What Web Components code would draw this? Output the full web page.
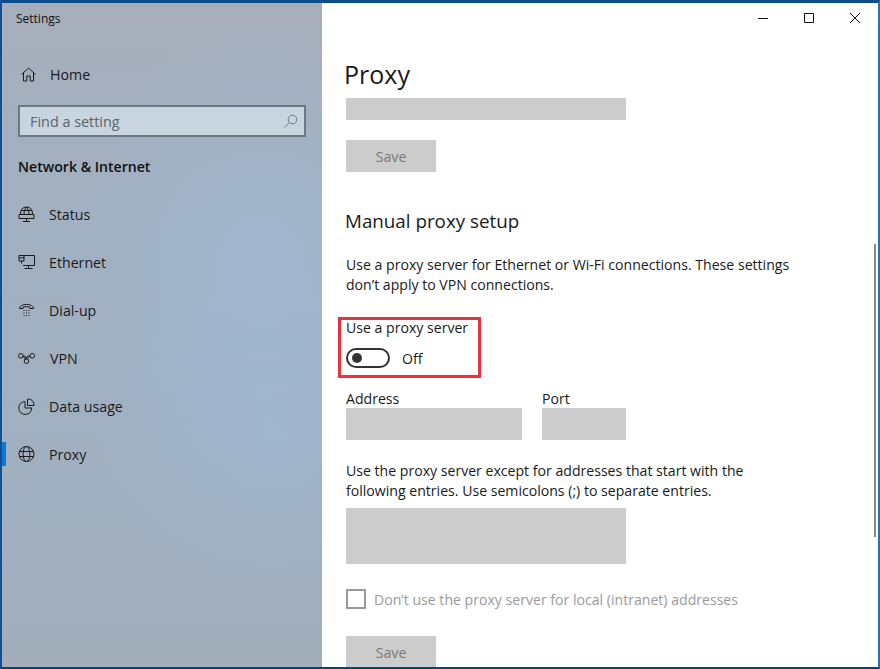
<!DOCTYPE html>
<html lang="en"><head><meta charset="utf-8"><title>Settings</title>
<style>
html,body{margin:0;padding:0;width:880px;height:669px;overflow:hidden;background:#fff}
body{font-family:"Open Sans","Noto Sans",sans-serif;color:#1a1a1a}
</style></head>
<body>
<settings-window>
  <settings-sidebar slot="side">
    <nav-item icon="home" style="--gap:13px;--ix:18px">Home</nav-item>
    <search-box placeholder="Find a setting"></search-box>
    <section-title>Network &amp; Internet</section-title>
    <nav-item icon="status">Status</nav-item>
    <nav-item icon="ethernet">Ethernet</nav-item>
    <nav-item icon="dialup">Dial-up</nav-item>
    <nav-item icon="vpn" style="--gap:15px">VPN</nav-item>
    <nav-item icon="data">Data usage</nav-item>
    <nav-item icon="globe" active>Proxy</nav-item>
  </settings-sidebar>
  <proxy-page slot="main"></proxy-page>
</settings-window>

<script>
const ICONS={
home:'<path d="M1.5 8.500 8.500 2 15.500 8.500M3.500 7V15H6.800V10H10.200V15H13.500V7"/>',
status:'<path d="M2.700 8.500A6 6 0 1 1 14.300 8.500M8.500 1C6.800 3 6 5.500 6 8.500M8.500 1C10.200 3 11 5.500 11 8.500M3 4.500H14M1 8.500H16V12.500H1ZM8.500 12.500V15.500M5 15.500H12"/>',
ethernet:'<path d="M6 1.500H16.500V11.500H5M1 1.500H6V7H1ZM1 3.800H6M3.500 7V9.500M10.500 11.500V14.500M6.500 14.500H14.500"/>',
dialup:'<path d="M1.500 6.500C1.500 4 4.500 2.500 8.500 2.500S15.500 4 15.500 6.500H12V5.200C10.500 4.500 6.500 4.500 5 5.200V6.500Z"/><path d="M5.500 8.500h1M8 8.500h1M10.500 8.500h1M5.500 11h1M8 11h1M10.500 11h1M5.500 13.500h1M8 13.500h1M10.500 13.500h1"/>',
vpn:'<circle cx="2.800" cy="5.800" r="2.300"/><circle cx="14.200" cy="5.800" r="2.300"/><circle cx="8.500" cy="11.200" r="2.300"/><path d="M5.100 5.800C7.500 5.800 8.500 7.500 8.500 8.900M11.900 5.800C9.500 5.800 8 7 6.500 10M5 6.500C7.500 9 9.500 9 12 6.500"/>',
data:'<path d="M7 3.500A6.500 6.500 0 1 0 13.800 10H7Z"/><path d="M9.500 1H10.500A5.800 5.800 0 0 1 16 7.500H9.500Z"/>',
globe:'<circle cx="8.500" cy="8" r="7.500"/><ellipse cx="8.500" cy="8" rx="3.400" ry="7.500"/><path d="M1.500 5.500H15.500M1.500 10.500H15.500"/>'
};
const def=(n,html)=>customElements.define(n,class extends HTMLElement{
  connectedCallback(){ if(this.shadowRoot)return; const r=this.attachShadow({mode:'open'}); r.innerHTML=typeof html==='function'?html(this):html; }
});
def('settings-window',`<style>
:host{display:flex;box-sizing:border-box;width:880px;height:669px;border-style:solid;border-color:#0c4d8c #1679c0 #0b4470 #114f94;border-width:3px 2px 2px 2px;background:#fff;overflow:hidden;position:relative}
.side{flex:0 0 320px;display:flex}
.main{flex:1;display:flex;flex-direction:column;min-width:0}
.bar{flex:0 0 34px;display:flex;justify-content:flex-end}
.btn{width:46px;height:30px;display:flex;align-items:center;justify-content:center}
.btn svg{width:12px;height:12px;fill:none;stroke:#111;stroke-width:1}
.body{flex:1;display:flex;min-height:0}
.sb{position:absolute;left:872px;top:241px;width:2px;height:293px;background:#8a8a8a}
</style>
<div class="side"><slot name="side"></slot></div>
<div class="main">
 <div class="bar">
  <div class="btn"><svg viewBox="0 0 12 12"><path d="M1 6.500H11"/></svg></div>
  <div class="btn"><svg viewBox="0 0 12 12"><path d="M1.500 1.500H10.500V10.500H1.500Z"/></svg></div>
  <div class="btn"><svg viewBox="0 0 12 12"><path d="M1 1 11 11M11 1 1 11"/></svg></div>
 </div>
 <div class="body"><slot name="main"></slot></div>
</div>
<div class="sb"></div>`);
def('settings-sidebar',`<style>
:host{display:flex;flex-direction:column;width:320px;height:100%;box-sizing:border-box;padding-top:8px;
background:
 radial-gradient(ellipse 190px 240px at 260px 260px,rgba(160,186,214,.6),rgba(160,186,214,0) 100%),
 radial-gradient(ellipse 180px 170px at 270px 430px,rgba(158,184,210,.6),rgba(158,184,210,0) 100%),
 linear-gradient(180deg,#a6aeba 0,#a2b0c0 30%,#a0b0c2 60%,#a2aeba 100%);}
.t{height:16px;padding-left:14px;font-size:12px;line-height:16px;color:#111}
.s{height:23px}
.items{display:flex;flex-direction:column}
</style><div class="t">Settings</div><div class="s"></div><div class="items"><slot></slot></div>`);
def('nav-item',el=>`<style>
:host{display:flex;position:relative;align-items:center;height:48px;box-sizing:border-box;padding-left:var(--ix,16px);font-size:14.200px;color:#1a1a1a}
svg{width:17px;height:17px;flex:none;fill:none;stroke:#1a1a1a;stroke-width:1}
span{margin-left:var(--gap,14px)}
.a{position:absolute;left:0;top:12px;width:4px;height:24px;background:#0a78d7}
</style>${el.hasAttribute('active')?'<div class="a"></div>':''}<svg viewBox="0 0 17 17">${ICONS[el.getAttribute('icon')]}</svg><span><slot></slot></span>`);
def('search-box',el=>`<style>
:host{display:flex;align-items:center;justify-content:space-between;box-sizing:border-box;width:288px;height:32px;margin:7px 0 0 16px;border:2px solid #6b7986;background:#c8d4de;padding:0 6px 0 10px;font-size:14.400px;color:#5b6570}
svg{width:15px;height:15px;fill:none;stroke:#6a7682;stroke-width:1}
</style><span>${el.getAttribute('placeholder')}</span><svg viewBox="0 0 15 15"><circle cx="9.500" cy="5.500" r="4.300"/><path d="M6.300 8.700 1.500 13.500"/></svg>`);
def('section-title',`<style>
:host{display:flex;align-items:center;height:36px;margin:11px 0 6px 16px;font-size:14.100px;font-weight:600;color:#111}
</style><slot></slot>`);
def('gray-field',`<style>:host{display:block;background:#cccccc;width:var(--w);height:var(--h)}</style>`);
def('save-button',`<style>:host{display:flex;align-items:center;justify-content:center;width:90px;height:32px;background:#cccccc;color:#7a7a7a;font-size:14.200px}</style><slot></slot>`);
def('toggle-switch',`<style>
:host{display:flex;align-items:center;gap:12px;font-size:14.100px;color:#1a1a1a}
.t{box-sizing:border-box;width:44px;height:20px;border:2px solid #333;border-radius:10px;display:flex;align-items:center;padding-left:4px}
.k{width:10px;height:10px;border-radius:50%;background:#333}
</style><div class="t"><div class="k"></div></div><slot></slot>`);
def('check-box',`<style>
:host{display:flex;align-items:center;gap:8px;font-size:14.100px;color:#9a9a9a}
.b{box-sizing:border-box;width:20px;height:20px;border:2px solid #9a9a9a}
</style><div class="b"></div><slot></slot>`);
def('proxy-page',`<style>
:host{display:flex;flex-direction:column;flex:1;padding-left:24px;font-size:14.100px;color:#1a1a1a;overflow:hidden;min-width:0}
h1{margin:14px 0 0 -2px;height:46px;line-height:46px;font-size:25px;font-weight:400;color:#1a1a1a}
h2{margin:0 0 0 -1px;font-weight:400;font-size:18.800px;line-height:28px;height:28px}
p{margin:0;line-height:20px;white-space:nowrap}
.hl{box-sizing:border-box;width:143px;height:61px;margin-left:-8px;border:3px solid #e8333f;padding:0 0 0 5px;display:flex;flex-direction:column;flex:none}
.hl .l{height:20px;line-height:20px;margin-top:-2px}
.fields{display:grid;grid-template-columns:176px 84px;grid-template-rows:19px 32px;column-gap:20px}
.fields div{height:19px;line-height:20px}
</style>
<h1>Proxy</h1>
<gray-field style="--w:280px;--h:22px;margin-top:1px;flex:none"></gray-field>
<save-button style="margin-top:20px;flex:none">Save</save-button>
<h2 style="margin-top:35px;flex:none">Manual proxy setup</h2>
<p style="margin-top:20px">Use a proxy server for Ethernet or Wi-Fi connections. These settings<br>don’t apply to VPN connections.</p>
<div class="hl" style="margin-top:22px"><div class="l">Use a proxy server</div><toggle-switch style="margin-top:10px">Off</toggle-switch></div>
<div class="fields" style="margin-top:11px"><div>Address</div><div>Port</div>
<gray-field style="--w:176px;--h:32px"></gray-field><gray-field style="--w:84px;--h:32px"></gray-field></div>
<p style="margin-top:21px">Use the proxy server except for addresses that start with the<br>following entries. Use semicolons (;) to separate entries.</p>
<gray-field style="--w:280px;--h:56px;margin-top:7px;flex:none"></gray-field>
<check-box style="margin-top:25px;flex:none">Don’t use the proxy server for local (intranet) addresses</check-box>
<save-button style="margin-top:27px;flex:none">Save</save-button>`);
</script>
</body></html>
